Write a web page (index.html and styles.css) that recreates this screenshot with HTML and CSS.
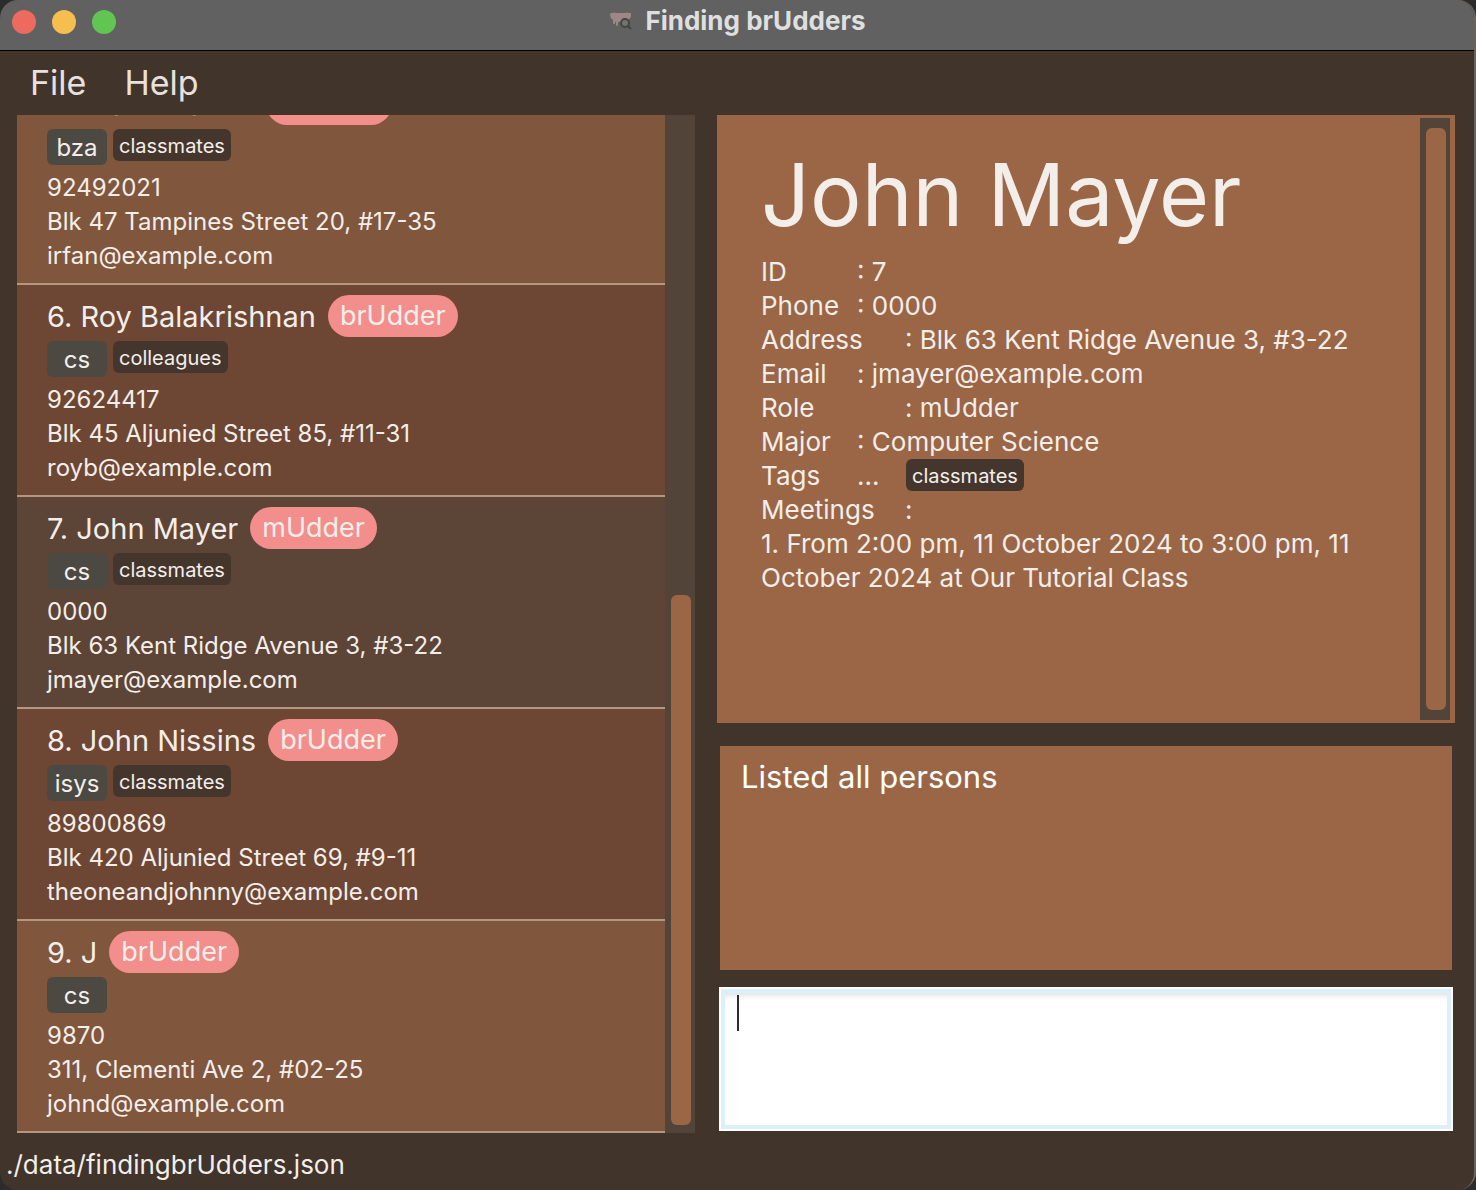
FILE: index.html
```html
<!DOCTYPE html>
<html lang="en">
<head>
<meta charset="utf-8">
<title>Finding brUdders</title>
<link rel="stylesheet" href="styles.css">
</head>
<body>
<div class="window">
  <header class="titlebar">
    <div class="controls">
      <button class="dot close" aria-label="Close"></button>
      <button class="dot minimise" aria-label="Minimise"></button>
      <button class="dot maximise" aria-label="Maximise"></button>
    </div>
    <h1 class="title">
      <svg class="logo" viewBox="0 0 22 18" aria-hidden="true">
        <path fill="#9a8786" d="M0 2Q0 1 2 1Q4 0 6 1H15Q17 0 19 1H21V5L19 7V11Q18 12 17 10L13 9L11 12Q10 12 10 10L8 10V13Q7 15 6 13V10L5 10V12Q4 13 3 11V8Q0 6 0 2Z"/>
        <circle cx="15" cy="11" r="4" fill="#777170" stroke="#444" stroke-width="2"/>
        <path d="M18 14L21 17" stroke="#444" stroke-width="2"/>
      </svg>
      Finding brUdders
    </h1>
  </header>
  <nav class="menu">
    <button class="menu-item">File</button>
    <button class="menu-item">Help</button>
  </nav>
  <main class="main">
    <section class="people" aria-label="Persons">
      <ul class="list">
        <li class="card">
          <div class="head"><span class="name">5. Irfan Ibrahim</span><span class="role">mUdder</span></div>
          <div class="tags"><span class="major">bza</span><span class="tag">classmates</span></div>
          <p>92492021</p><p>Blk 47 Tampines Street 20, #17-35</p><p>irfan@example.com</p>
        </li>
        <li class="card">
          <div class="head"><span class="name">6. Roy Balakrishnan</span><span class="role">brUdder</span></div>
          <div class="tags"><span class="major">cs</span><span class="tag">colleagues</span></div>
          <p>92624417</p><p>Blk 45 Aljunied Street 85, #11-31</p><p>royb@example.com</p>
        </li>
        <li class="card selected">
          <div class="head"><span class="name">7. John Mayer</span><span class="role">mUdder</span></div>
          <div class="tags"><span class="major">cs</span><span class="tag">classmates</span></div>
          <p>0000</p><p>Blk 63 Kent Ridge Avenue 3, #3-22</p><p>jmayer@example.com</p>
        </li>
        <li class="card">
          <div class="head"><span class="name">8. John Nissins</span><span class="role">brUdder</span></div>
          <div class="tags"><span class="major">isys</span><span class="tag">classmates</span></div>
          <p>89800869</p><p>Blk 420 Aljunied Street 69, #9-11</p><p>theoneandjohnny@example.com</p>
        </li>
        <li class="card">
          <div class="head"><span class="name">9. J</span><span class="role">brUdder</span></div>
          <div class="tags"><span class="major">cs</span></div>
          <p>9870</p><p>311, Clementi Ave 2, #02-25</p><p>johnd@example.com</p>
        </li>
      </ul>
      <div class="track list-track"><div class="thumb"></div></div>
    </section>
    <div class="side">
      <section class="detail">
        <div class="detail-body">
          <h2 class="detail-name">John Mayer</h2>
          <dl class="fields">
            <div class="field"><dt>ID</dt><dd>: 7</dd></div>
            <div class="field"><dt>Phone</dt><dd>: 0000</dd></div>
            <div class="field wide"><dt>Address</dt><dd>: Blk 63 Kent Ridge Avenue 3, #3-22</dd></div>
            <div class="field"><dt>Email</dt><dd>: jmayer@example.com</dd></div>
            <div class="field wide"><dt>Role</dt><dd>: mUdder</dd></div>
            <div class="field"><dt>Major</dt><dd>: Computer Science</dd></div>
            <div class="field"><dt>Tags</dt><dd class="tag-list"><span class="more">...</span><span class="tag">classmates</span></dd></div>
            <div class="field wide"><dt>Meetings</dt><dd>:</dd></div>
          </dl>
          <p class="meeting">1. From 2:00 pm, 11 October 2024 to 3:00 pm, 11 October 2024 at Our Tutorial Class</p>
        </div>
        <div class="track detail-track"><div class="thumb"></div></div>
      </section>
      <output class="result">Listed all persons</output>
      <div class="command">
        <textarea class="command-input" aria-label="Command"></textarea>
        <span class="caret"></span>
      </div>
    </div>
  </main>
  <footer class="status">./data/findingbrUdders.json</footer>
</div>
</body>
</html>
```
FILE: styles.css
```css
* { box-sizing: border-box; }

body {
  margin: 0;
  background: #2c2c2c;
  color: #f4eeea;
  font-family: Inter, "Liberation Sans", sans-serif;
}

h1, h2, p, ul, dl, dd { margin: 0; padding: 0; font-weight: 400; }
button { border: 0; padding: 0; background: none; color: inherit; font: inherit; }

.window {
  display: grid;
  grid-template-rows: 51px 64px 1fr 57px;
  min-height: 100vh;
  overflow: hidden;
  border-right: 2px solid #6b625c;
  border-radius: 18px;
  background: #41342b;
}

.titlebar {
  display: grid;
  grid-template-columns: 1fr auto 1fr;
  align-items: center;
  margin-right: -2px;
  padding: 0 12px 6px;
  border-bottom: 1px solid #000;
  background: #616161;
}
.controls { display: flex; gap: 16px; }
.dot { width: 24px; height: 24px; border-radius: 50%; }
.close { background: #ed6a5e; }
.minimise { background: #f5bf4f; }
.maximise { background: #61c554; }
.title {
  display: flex;
  align-items: center;
  gap: 13px;
  color: #dfdfdf;
  font-size: 26px;
  font-weight: 700;
  line-height: 40px;
  padding-bottom: 2px;
}
.logo { width: 22px; height: 18px; }

.menu { display: flex; gap: 38px; padding: 0 30px 2px; font-size: 34px; color: #e9e1dd; }

.main {
  display: grid;
  grid-template-columns: 678fr 738fr;
  gap: 22px;
  padding: 0 19px 0 17px;
}

.people { display: flex; height: 0; min-height: 100%; overflow: hidden; }
.list {
  display: flex;
  flex: 1;
  flex-direction: column;
  justify-content: flex-end;
  list-style: none;
}
.card {
  flex: none;
  padding: 10px 30px;
  border-bottom: 2px solid #b39880;
  background: #80563d;
  font-size: 24px;
  line-height: 34px;
}
.card:nth-child(even) { background: #6d4733; }
.card.selected { background: #5c4436; }
.head { display: flex; align-items: center; gap: 12px; height: 42px; }
.name { padding-top: 2px; font-size: 29px; }
.role { padding: 0 12px; border-radius: 21px; background: #f28e8b; font-size: 27px; line-height: 42px; }
.tags { display: flex; align-items: flex-start; gap: 6px; margin: 4px 0 6px; }
.major {
  min-width: 60px;
  height: 36px;
  padding-top: 2px;
  border-radius: 6px;
  background: #4c4943;
  text-align: center;
}
.tag {
  height: 32px;
  padding: 1px 6px 0;
  border-radius: 6px;
  background: #45362d;
  font-size: 20px;
  line-height: 32px;
}

.track { flex: none; width: 30px; padding-left: 6px; background: #53443a; }
.thumb { width: 20px; height: 100%; border-radius: 6px; background: #9a6646; }
.list-track { padding-top: 480px; padding-bottom: 8px; }

.side { display: grid; grid-template-rows: 1fr 224px 161px; padding-bottom: 2px; }
.detail { display: flex; margin-bottom: 23px; padding: 3px 5px 3px 44px; background: #9a6646; }
.detail-body { flex: 1; padding-right: 44px; font-size: 26px; line-height: 34px; }
.detail-name { padding: 27px 0 10px; font-size: 86px; line-height: 100px; }
.detail-track { padding-top: 10px; padding-bottom: 10px; }
.field { display: flex; }
.field dt { flex: none; width: 96px; }
.field.wide dt { width: 144px; }
.tag-list { display: flex; align-items: flex-start; }
.more { width: 49px; }
.result {
  margin: 0 3px;
  padding: 10px 21px;
  background: #9a6646;
  color: #fff;
  font-size: 31px;
  line-height: 42px;
}
.command { position: relative; margin: 17px 2px 0; }
.command-input {
  display: block;
  width: 100%;
  height: 100%;
  padding: 6px 14px;
  border: 2px solid #fff;
  outline: 0;
  background: #fff;
  box-shadow: inset 0 0 0 4px #dbf0f9, inset 0 6px 6px #ddd;
  color: #222;
  font: 32px/36px Inter, sans-serif;
  resize: none;
}
.caret { position: absolute; top: 8px; left: 18px; width: 2px; height: 36px; background: #2c2c2c; }

.status { padding: 10px 6px; font-size: 26px; line-height: 44px; }
```
